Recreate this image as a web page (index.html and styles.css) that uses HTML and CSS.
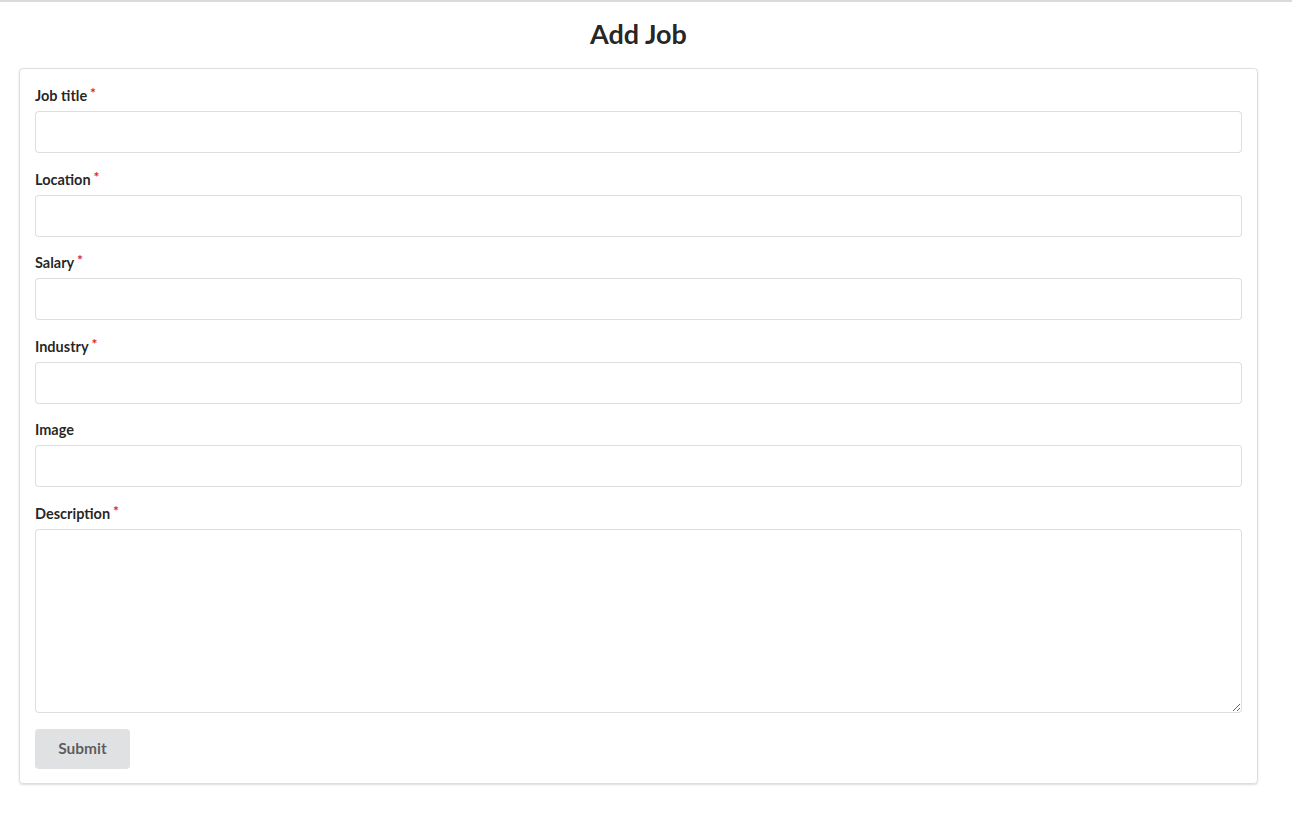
FILE: index.html
```
<!DOCTYPE html>
<html lang="en">
<head>
<meta charset="utf-8">
<title>Add Job</title>
<link rel="stylesheet" href="styles.css">
</head>
<body>
<div class="page">
  <h2 class="title">Add Job</h2>
  <form class="card">
    <div class="field">
      <label class="label required">Job title</label>
      <input class="input" type="text">
    </div>
    <div class="field">
      <label class="label required">Location</label>
      <input class="input" type="text">
    </div>
    <div class="field">
      <label class="label required">Salary</label>
      <input class="input" type="text">
    </div>
    <div class="field">
      <label class="label required">Industry</label>
      <input class="input" type="text">
    </div>
    <div class="field">
      <label class="label">Image</label>
      <input class="input" type="text">
    </div>
    <div class="field">
      <label class="label required">Description</label>
      <textarea class="textarea"></textarea>
    </div>
    <button class="button" type="button">Submit</button>
  </form>
</div>
</body>
</html>
```
FILE: styles.css
```
html, body {
  margin: 0;
  padding: 0;
  background: #ffffff;
}
body {
  font-family: Lato, "Helvetica Neue", Arial, sans-serif;
  color: rgba(0, 0, 0, 0.87);
  border-top: 2px solid #dadada;
}
.page {
  width: 1277px;
  display: flex;
  flex-direction: column;
  align-items: center;
}
.title {
  margin: 14px 0 16px 0;
  font-size: 27px;
  line-height: 36px;
  font-weight: 700;
  color: rgba(0, 0, 0, 0.87);
}
.card {
  box-sizing: border-box;
  width: 1239px;
  margin: 0 0 30px 0;
  padding: 16px 15px 14px 15px;
  border: 1px solid rgba(34, 36, 38, 0.15);
  border-radius: 4px;
  box-shadow: 0 1px 2px 0 rgba(34, 36, 38, 0.15);
  display: flex;
  flex-direction: column;
  align-items: flex-start;
}
.field {
  align-self: stretch;
  display: flex;
  flex-direction: column;
  margin-bottom: 15.5px;
}
.label {
  display: block;
  font-size: 14.5px;
  line-height: 21px;
  font-weight: 700;
  margin-bottom: 5px;
  color: rgba(0, 0, 0, 0.87);
}
.required::after {
  content: "*";
  color: #db2828;
  margin: -0.2em 0 0 0.2em;
  display: inline-block;
  vertical-align: top;
  font-size: 14px;
}
.input, .textarea {
  box-sizing: border-box;
  width: 100%;
  margin: 0;
  font-family: Lato, "Helvetica Neue", Arial, sans-serif;
  font-size: 15px;
  color: rgba(0, 0, 0, 0.87);
  background: #ffffff;
  border: 1px solid rgba(34, 36, 38, 0.15);
  border-radius: 4px;
  outline: none;
}
.input {
  height: 42px;
  padding: 10px 15px;
}
.textarea {
  height: 184px;
  padding: 12px 15px;
  resize: vertical;
}
.button {
  margin-top: 1px;
  height: 40px;
  width: 95px;
  padding: 0 0 2px 0;
  border: none;
  border-radius: 4px;
  background: #e0e1e2;
  color: rgba(0, 0, 0, 0.6);
  font-family: Lato, "Helvetica Neue", Arial, sans-serif;
  font-size: 15.5px;
  font-weight: 700;
  cursor: pointer;
}
```
